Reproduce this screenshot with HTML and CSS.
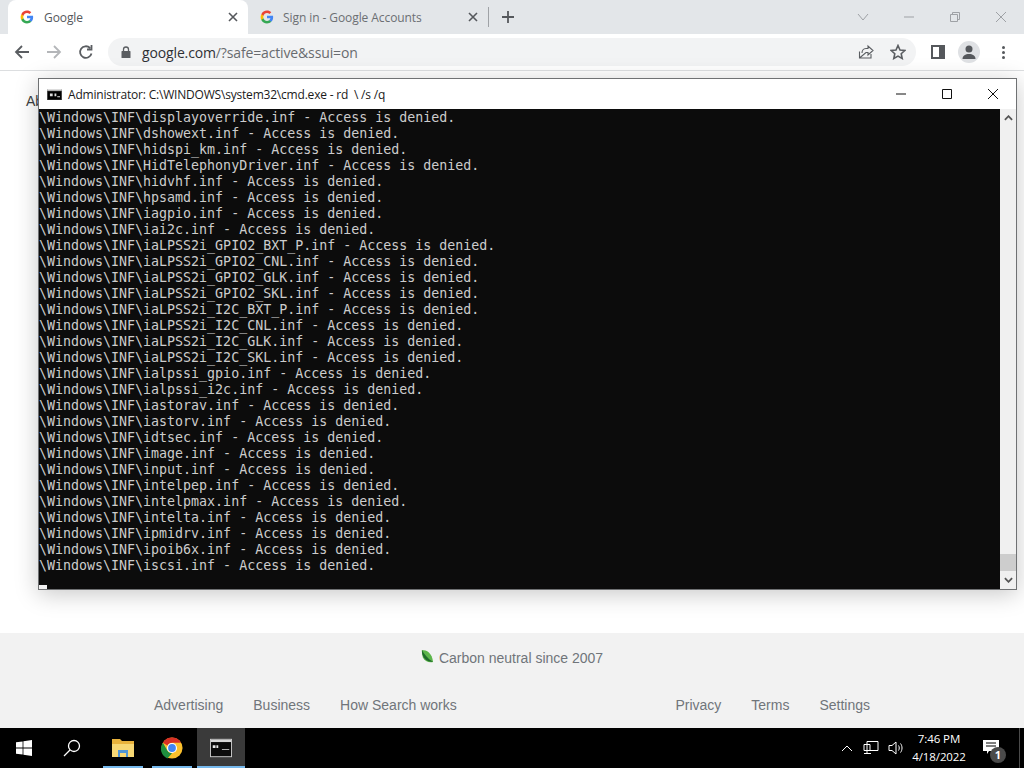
FILE: index.html
```html
<!DOCTYPE html>
<html lang="en">
<head>
<meta charset="utf-8">
<title>Google</title>
<link rel="stylesheet" href="styles.css">
</head>
<body>
<div class="desktop">
  <div class="browser">
    <div class="tabstrip">
      <div class="tab tab-active">
        <svg class="favicon" viewBox="0 0 48 48"><path fill="#4285f4" d="M45 24.5c0-1.6-.1-3-.4-4.5H24v8.5h11.800c-.5 2.800-2.100 5.100-4.400 6.700v5.500h7.100C42.600 36.900 45 31.200 45 24.500z"/><path fill="#34a853" d="M24 46c5.900 0 10.900-2 14.500-5.300l-7.100-5.500c-2 1.300-4.500 2.100-7.400 2.100-5.700 0-10.500-3.800-12.200-9H4.500v5.700C8.100 41.200 15.500 46 24 46z"/><path fill="#fbbc05" d="M11.800 28.300c-.9-2.700-.9-5.600 0-8.300v-5.700H4.500c-3 6-3 13.700 0 19.700z"/><path fill="#ea4335" d="M24 10.700c3.200 0 6.100 1.100 8.400 3.300l6.300-6.300C34.900 4.200 29.900 2 24 2 15.500 2 8.100 6.800 4.500 14.300l7.300 5.700c1.700-5.400 6.500-9.300 12.200-9.300z"/></svg>
        <span class="tab-title">Google</span>
        <svg class="tab-x" viewBox="0 0 10 10"><path d="M1 1l8 8M9 1l-8 8"/></svg>
      </div>
      <div class="tab">
        <svg class="favicon" viewBox="0 0 48 48"><path fill="#4285f4" d="M45 24.5c0-1.6-.1-3-.4-4.5H24v8.5h11.800c-.5 2.800-2.100 5.100-4.400 6.700v5.500h7.100C42.600 36.900 45 31.200 45 24.500z"/><path fill="#34a853" d="M24 46c5.900 0 10.900-2 14.500-5.300l-7.100-5.500c-2 1.300-4.500 2.100-7.400 2.100-5.700 0-10.500-3.800-12.200-9H4.500v5.700C8.100 41.200 15.500 46 24 46z"/><path fill="#fbbc05" d="M11.800 28.300c-.9-2.700-.9-5.600 0-8.300v-5.700H4.500c-3 6-3 13.700 0 19.700z"/><path fill="#ea4335" d="M24 10.700c3.200 0 6.100 1.100 8.400 3.300l6.300-6.300C34.900 4.200 29.900 2 24 2 15.500 2 8.100 6.800 4.500 14.300l7.300 5.700c1.700-5.400 6.500-9.300 12.200-9.300z"/></svg>
        <span class="tab-title tab-title-dim">Sign in - Google Accounts</span>
        <svg class="tab-x" viewBox="0 0 10 10"><path d="M1 1l8 8M9 1l-8 8"/></svg>
      </div>
      <span class="tab-sep"></span>
      <svg class="new-tab" viewBox="0 0 12 12"><path d="M6 0v12M0 6h12"/></svg>
      <div class="frame-controls">
        <svg class="frame-icon" viewBox="0 0 12 12"><path d="M1 3l5 6 5-6"/></svg>
        <svg class="frame-icon" viewBox="0 0 12 12"><path d="M1 6h10"/></svg>
        <svg class="frame-icon" viewBox="0 0 12 12"><path d="M1.500 3.500h7v7h-7zM3.500 3.500v-2h7v7h-2"/></svg>
        <svg class="frame-icon" viewBox="0 0 12 12"><path d="M1 1l10 10M11 1L1 11"/></svg>
      </div>
    </div>
    <div class="toolbar">
      <svg class="nav-icon" viewBox="0 0 16 16"><path d="M15 8H2M8 2L2 8l6 6"/></svg>
      <svg class="nav-icon nav-off" viewBox="0 0 16 16"><path d="M1 8h13M8 2l6 6-6 6"/></svg>
      <svg class="nav-icon" viewBox="0 0 16 16"><path d="M13.500 9.500A5.800 5.800 0 1 1 12 4M13.500 1v4.500H9" /></svg>
      <div class="omnibox">
        <svg class="lock" viewBox="0 0 10 12"><path d="M1 5h8a.5.5 0 0 1 .5.500v6a.5.5 0 0 1-.5.500H1a.5.5 0 0 1-.5-.5v-6A.5.5 0 0 1 1 5z"/><path class="lock-loop" d="M2.500 5V3.500a2.500 2.500 0 0 1 5 0V5"/></svg>
        <span class="url">google.com<span class="url-dim">/?safe=active&amp;ssui=on</span></span>
        <svg class="omni-icon" viewBox="0 0 16 16"><path d="M13 10v4H1.500V7.500M1.500 14L8 8.500h2V11l5-4.500L10 2v2.500H8C5 4.500 4 7 4 9"/></svg>
        <svg class="omni-icon omni-star" viewBox="0 0 16 16"><path d="M8 1.500l2 4.500 4.800.5-3.600 3.200 1 4.800L8 12.100l-4.200 2.400 1-4.800L1.200 6.500 6 6z"/></svg>
      </div>
      <div class="side-panel"><span class="side-panel-bar"></span></div>
      <div class="avatar">
        <svg viewBox="0 0 22 22"><circle cx="11" cy="8" r="3.500"/><path d="M4.500 18c0-3.500 3-5 6.500-5s6.500 1.500 6.500 5z"/></svg>
      </div>
      <div class="menu-dots"><i></i><i></i><i></i></div>
    </div>
    <main class="page">
      <div class="page-head">About</div>
    </main>
    <footer class="page-footer">
      <div class="carbon">
        <svg class="leaf" viewBox="0 0 14 16"><path fill="#5cb54a" d="M1 1c5 0 11 3 12 13-5 1-9-1-11-5C1 6 1 3 1 1z"/><path fill="#1f6a2c" d="M1 1c2 4 6 9 12 13C8 14 3 11 2 7 1 5 1 3 1 1z"/></svg>
        <span>Carbon neutral since 2007</span>
      </div>
      <div class="foot-links">
        <div class="foot-group"><span>Advertising</span><span>Business</span><span>How Search works</span></div>
        <div class="foot-group"><span>Privacy</span><span>Terms</span><span>Settings</span></div>
      </div>
    </footer>
  </div>

  <div class="taskbar">
    <div class="task task-start">
      <svg viewBox="0 0 16 16"><path fill="#fff" d="M0 2.300l6.600-.9v6.200H0zM7.400 1.300L16 0v7.600H7.400zM0 8.400h6.600v6.200L0 13.700zM7.400 8.400H16V16l-8.600-1.200z"/></svg>
    </div>
    <div class="task">
      <svg class="search-ic" viewBox="0 0 18 18"><circle cx="11" cy="7" r="5.500"/><path d="M7 11l-6 6"/></svg>
    </div>
    <div class="task task-app">
      <svg viewBox="0 0 22 20"><path fill="#e8b23c" d="M0 1h8l2 2h12v16H0z"/><path fill="#f7d774" d="M0 6h22v13H0z"/><path fill="#4f94d4" d="M6 12h10v7h-2v-4H8v4H6z"/></svg>
    </div>
    <div class="task task-app">
      <svg viewBox="0 0 48 48"><circle cx="24" cy="24" r="23" fill="#fbc02d"/><path fill="#d93025" d="M24 1a23 23 0 0 1 19.900 11.500H24a11.500 11.500 0 0 0-10 5.800L4.100 12.500A23 23 0 0 1 24 1z"/><path fill="#1e8e3e" d="M4.100 12.500l10 17.300a11.500 11.500 0 0 0 10 5.700L14 47A23 23 0 0 1 4.100 12.500z"/><circle cx="24" cy="24" r="11" fill="#fff"/><circle cx="24" cy="24" r="8.500" fill="#4285f4"/></svg>
    </div>
    <div class="task task-app task-current">
      <svg viewBox="0 0 24 20"><rect x=".5" y=".5" width="23" height="19" fill="#0c0c0c" stroke="#cfcfcf"/><rect x="1" y="1" width="22" height="2.500" fill="#d8d8d8"/><path d="M3 7h3v3H3zM7 7h2v3H7zM13 11h8v1h-8z" fill="#e8e8e8"/></svg>
    </div>
    <div class="tray">
      <svg class="tray-ic tray-chev" viewBox="0 0 12 8"><path d="M1 7l5-5 5 5"/></svg>
      <svg class="tray-ic" viewBox="0 0 16 16"><path d="M4 1.500h11v9H4zM1 4.500h6v6H1zM4 10.500v3M1 13.500h7"/></svg>
      <svg class="tray-ic" viewBox="0 0 16 16"><path d="M1 5.500h3L8 2v12L4 10.500H1zM10.500 5.500c1 1.500 1 3.500 0 5M12.500 3.500c2 2.500 2 6.500 0 9"/></svg>
      <div class="clock"><span>7:46 PM</span><span>4/18/2022</span></div>
      <div class="notif">
        <svg viewBox="0 0 16 14"><path fill="#fff" d="M0 0h16v11H6l-2 3v-3H0z"/><path stroke="#000" d="M3 3h10M3 6h10"/></svg>
        <span class="notif-badge">1</span>
      </div>
      <span class="show-desktop"></span>
    </div>
  </div>

  <section class="cmd">
    <header class="cmd-title">
      <svg class="cmd-ic" viewBox="0 0 16 12"><rect width="16" height="12" fill="#222"/><rect x="1" y="3" width="14" height="8" fill="#000"/><path fill="#ddd" d="M0 0h16v2H0zM3 5h3v3H3zM8 5h2v3H8zM11 8h3v1h-3z"/></svg>
      <span class="cmd-name">Administrator: C:\WINDOWS\system32\cmd.exe - rd  \ /s /q</span>
      <svg class="cmd-btn" viewBox="0 0 12 12"><path d="M1 6h10"/></svg>
      <svg class="cmd-btn" viewBox="0 0 12 12"><path d="M1.500 1.500h9v9h-9z"/></svg>
      <svg class="cmd-btn" viewBox="0 0 12 12"><path d="M1 1l10 10M11 1L1 11"/></svg>
    </header>
    <div class="cmd-body">
      <div class="console">
        <div class="line">\Windows\INF\displayoverride.inf - Access is denied.</div>
        <div class="line">\Windows\INF\dshowext.inf - Access is denied.</div>
        <div class="line">\Windows\INF\hidspi_km.inf - Access is denied.</div>
        <div class="line">\Windows\INF\HidTelephonyDriver.inf - Access is denied.</div>
        <div class="line">\Windows\INF\hidvhf.inf - Access is denied.</div>
        <div class="line">\Windows\INF\hpsamd.inf - Access is denied.</div>
        <div class="line">\Windows\INF\iagpio.inf - Access is denied.</div>
        <div class="line">\Windows\INF\iai2c.inf - Access is denied.</div>
        <div class="line">\Windows\INF\iaLPSS2i_GPIO2_BXT_P.inf - Access is denied.</div>
        <div class="line">\Windows\INF\iaLPSS2i_GPIO2_CNL.inf - Access is denied.</div>
        <div class="line">\Windows\INF\iaLPSS2i_GPIO2_GLK.inf - Access is denied.</div>
        <div class="line">\Windows\INF\iaLPSS2i_GPIO2_SKL.inf - Access is denied.</div>
        <div class="line">\Windows\INF\iaLPSS2i_I2C_BXT_P.inf - Access is denied.</div>
        <div class="line">\Windows\INF\iaLPSS2i_I2C_CNL.inf - Access is denied.</div>
        <div class="line">\Windows\INF\iaLPSS2i_I2C_GLK.inf - Access is denied.</div>
        <div class="line">\Windows\INF\iaLPSS2i_I2C_SKL.inf - Access is denied.</div>
        <div class="line">\Windows\INF\ialpssi_gpio.inf - Access is denied.</div>
        <div class="line">\Windows\INF\ialpssi_i2c.inf - Access is denied.</div>
        <div class="line">\Windows\INF\iastorav.inf - Access is denied.</div>
        <div class="line">\Windows\INF\iastorv.inf - Access is denied.</div>
        <div class="line">\Windows\INF\idtsec.inf - Access is denied.</div>
        <div class="line">\Windows\INF\image.inf - Access is denied.</div>
        <div class="line">\Windows\INF\input.inf - Access is denied.</div>
        <div class="line">\Windows\INF\intelpep.inf - Access is denied.</div>
        <div class="line">\Windows\INF\intelpmax.inf - Access is denied.</div>
        <div class="line">\Windows\INF\intelta.inf - Access is denied.</div>
        <div class="line">\Windows\INF\ipmidrv.inf - Access is denied.</div>
        <div class="line">\Windows\INF\ipoib6x.inf - Access is denied.</div>
        <div class="line">\Windows\INF\iscsi.inf - Access is denied.</div>
        <div class="cursor-line"><span class="cursor"></span></div>
      </div>
      <div class="scrollbar">
        <svg class="scroll-arrow" viewBox="0 0 10 6"><path d="M1 5l4-4 4 4"/></svg>
        <div class="scroll-track"><div class="scroll-thumb"></div></div>
        <svg class="scroll-arrow" viewBox="0 0 10 6"><path d="M1 1l4 4 4-4"/></svg>
      </div>
    </div>
  </section>
</div>
</body>
</html>
```
FILE: styles.css
```css
* { box-sizing: border-box; }
html, body { margin: 0; padding: 0; }
body { width: 1024px; height: 768px; overflow: hidden; background: #fff; }
svg { display: block; flex: none; }

.desktop { position: relative; width: 1024px; height: 768px; display: flex; flex-direction: column; font-family: "Liberation Sans", Arial, sans-serif; }
.browser { flex: 1; min-height: 0; display: flex; flex-direction: column; }

.tabstrip { height: 34px; background: #e3e6e9; display: flex; align-items: stretch; padding-left: 8px; position: relative; }
.tab { width: 240px; display: flex; align-items: center; padding: 0 10px 0 12px; font: 12px "Open Sans", sans-serif; letter-spacing: -0.080px; }
.tab-active { background: #fff; border-radius: 8px 8px 0 0; }
.favicon { width: 14px; height: 14px; margin-right: 10px; }
.tab-title { flex: 1; color: #55585c; white-space: nowrap; }
.tab-title-dim { color: #6c6f73; margin-left: -1px; }
.tab-x { width: 10px; height: 10px; fill: none; stroke: #55585c; stroke-width: 1.600; }
.tab-sep { width: 1px; height: 20px; background: #9fa2a6; align-self: center; }
.new-tab { width: 12px; height: 12px; margin-left: 13px; align-self: center; fill: none; stroke: #55585c; stroke-width: 1.800; }
.frame-controls { margin-left: auto; display: flex; align-items: center; gap: 34px; padding-right: 17px; }
.frame-icon { width: 12px; height: 12px; fill: none; stroke: #9ea1a5; stroke-width: 1; }

.toolbar { height: 37px; background: #fff; border-bottom: 1px solid #dcdee0; display: flex; align-items: center; padding-left: 14px; }
.nav-icon { width: 16px; height: 16px; margin-right: 16px; fill: none; stroke: #5a5d61; stroke-width: 1.800; }
.nav-off { stroke: #b4b6b9; }
.omnibox { width: 808px; height: 28px; margin-left: -2px; border-radius: 14px; background: #f2f3f4; display: flex; align-items: center; padding: 0 10px 0 13px; }
.lock { width: 10px; height: 12px; fill: #5a5d61; margin-right: 11px; }
.lock-loop { fill: none; stroke: #5a5d61; stroke-width: 1.300; }
.url { flex: 1; font: 14px "Open Sans", sans-serif; letter-spacing: -0.140px; color: #2f3134; white-space: nowrap; }
.url-dim { color: #686b6f; }
.omni-icon { width: 16px; height: 16px; fill: none; stroke: #5a5d61; stroke-width: 1.100; margin-left: 16px; }
.omni-star { stroke-width: 1.600; }
.side-panel { width: 14px; height: 14px; margin-left: 15px; border: 2px solid #55585c; display: flex; justify-content: flex-end; background: #fff; }
.side-panel-bar { width: 4px; background: #55585c; }
.avatar { width: 22px; height: 22px; border-radius: 50%; background: #dfe1e4; margin-left: 13px; overflow: hidden; fill: #55585c; }
.menu-dots { margin-left: 22px; display: flex; flex-direction: column; gap: 2px; }
.menu-dots i { width: 3px; height: 3px; border-radius: 50%; background: #55585c; display: block; }

.page { flex: 1; min-height: 0; background: #fff; padding: 21px 0 0 26px; }
.page-head { font-size: 14px; line-height: 18px; color: #3c3f43; }

.page-footer { height: 95px; background: #f2f2f2; color: #70757a; font-size: 14px; display: flex; flex-direction: column; }
.carbon { height: 50px; display: flex; align-items: center; justify-content: center; gap: 5px; }
.leaf { width: 13px; height: 15px; margin-top: -3px; }
.foot-links { height: 45px; padding: 0 154px 2px; display: flex; align-items: center; justify-content: space-between; }
.foot-group { display: flex; gap: 30px; }

.taskbar { height: 40px; background: #000; display: flex; align-items: stretch; flex: none; }
.task { width: 48px; display: flex; align-items: center; justify-content: center; position: relative; }
.task-start svg { width: 16px; height: 16px; }
.search-ic { width: 18px; height: 18px; fill: none; stroke: #fff; stroke-width: 1.300; }
.task-app { margin-left: 1px; }
.task-app:nth-child(3) { margin-left: 3px; }
.task-app svg { width: 22px; height: 22px; }
.task-app::after { content: ""; position: absolute; left: 4px; right: 4px; bottom: 0; height: 2px; background: #76b9ed; }
.task-current { background: #3a3a3a; }
.task-current::after { left: 0; right: 0; }
.tray { margin-left: auto; display: flex; align-items: center; }
.tray-ic { width: 16px; height: 16px; margin-left: 9px; fill: none; stroke: #fff; stroke-width: 1; }
.tray-chev { width: 12px; height: 8px; margin-left: 0; margin-right: 1px; }
.clock { width: 60px; margin-left: 5px; display: flex; flex-direction: column; align-items: center; gap: 2px; color: #fff; font: 11.500px/16px "Open Sans", sans-serif; letter-spacing: -0.100px; }
.notif { width: 24px; height: 24px; margin-left: 14px; position: relative; }
.notif svg { width: 16px; height: 14px; margin-top: 4px; }
.notif-badge { position: absolute; right: 1px; bottom: -3px; width: 16px; height: 16px; border-radius: 50%; background: #4a4a4a; color: #fff; font: 700 11px/16px "Open Sans", sans-serif; text-align: center; }
.show-desktop { width: 5px; height: 100%; margin-left: 12px; border-left: 1px solid #4a4a4a; }

.cmd { position: absolute; left: 38px; top: 78px; width: 979px; height: 512px; background: #fff; border: 1px solid #6f7173; box-shadow: 0 4px 22px rgba(0,0,0,.22); display: flex; flex-direction: column; }
.cmd-title { height: 30px; display: flex; align-items: center; padding-left: 8px; flex: none; }
.cmd-ic { width: 15px; height: 11px; margin-right: 6px; }
.cmd-name { flex: 1; font: 12px "Open Sans", sans-serif; color: #1a1a1a; white-space: pre; letter-spacing: -0.200px; }
.cmd-btn { width: 12px; height: 12px; margin-right: 34px; fill: none; stroke: #111; stroke-width: 1; }
.cmd-btn:last-child { margin-right: 17px; }
.cmd-body { flex: 1; min-height: 0; display: flex; }
.console { flex: 1; background: #0c0c0c; color: #cccccc; padding-top: 1px; font: 13.300px/16px "DejaVu Sans Mono", monospace; overflow: hidden; }
.line { height: 16px; white-space: pre; }
.cursor-line { height: 16px; position: relative; }
.cursor { position: absolute; left: 0; top: 11px; width: 8px; height: 4px; background: #f2f2f2; }
.scrollbar { width: 16px; background: #f0f0f0; display: flex; flex-direction: column; align-items: center; }
.scroll-arrow { width: 9px; height: 6px; margin: 6px 0; fill: none; stroke: #555; stroke-width: 2; flex: none; }
.scroll-track { flex: 1; width: 100%; display: flex; flex-direction: column; justify-content: flex-end; }
.scroll-thumb { height: 17px; background: #cdcdcd; }
```
